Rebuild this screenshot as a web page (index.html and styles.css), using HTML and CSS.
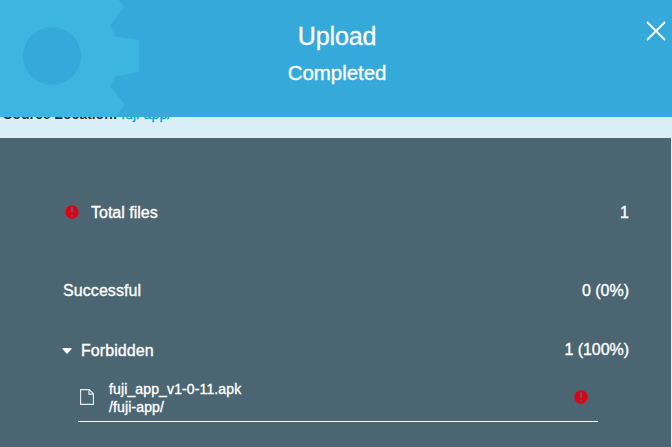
FILE: index.html
```
<!DOCTYPE html>
<html lang="en">
<head>
<meta charset="utf-8">
<title>Upload</title>
<link rel="stylesheet" href="styles.css">
</head>
<body>
<div class="dialog">
  <header class="header">
    <svg class="gear" viewBox="0 0 140 117" aria-hidden="true">
      <path fill="#3cb6e0" d="M0 0H118.500L123.300 5.500Q124 7 123 8.500L110.500 25L115 36.500L137 39.500Q139 40 139 42V70Q139 72 137 72.500L115 76.300L110.500 87L123.500 103Q124.500 105 123.500 106L116 117H0Z"/>
      <circle cx="52" cy="56" r="29" fill="#35aada"/>
    </svg>
    <h1 class="title">Upload</h1>
    <p class="status">Completed</p>
    <button class="close" aria-label="Close">
      <svg width="20" height="20" viewBox="0 0 20 20"><path d="M1 1L19 19M19 1L1 19" stroke="#fff" stroke-width="1.900"/></svg>
    </button>
  </header>
  <div class="location"><div class="location-text"><b>Source Location:</b> <a>fuji-app/</a></div></div>
  <main class="panel">
    <div class="row total">
      <svg class="alert" width="14" height="14" viewBox="0 0 14 14"><circle cx="7" cy="7" r="6.700" fill="#df0015"/><path d="M6 2.500H8L7.700 8.300H6.300ZM6.100 9.500H7.900V11.300H6.100Z" fill="#4b6672"/></svg>
      <span class="label">Total files</span>
      <span class="value">1</span>
    </div>
    <div class="row successful">
      <span class="label">Successful</span>
      <span class="value">0 (0%)</span>
    </div>
    <div class="row forbidden">
      <svg class="caret" width="10" height="6" viewBox="0 0 10 6"><path d="M0.500 0H9.500Q10 .5 9.500 1L5.500 5.500Q5 6 4.500 5.500L.5 1Q0 .5 .5 0Z" fill="#fff"/></svg>
      <span class="label">Forbidden</span>
      <span class="value">1 (100%)</span>
    </div>
    <div class="file">
      <svg class="doc" width="14" height="16" viewBox="0 0 14 16"><path d="M.6.600H9.200L13.400 4.800V15.400H.6ZM8.900.800V5.100H13.200" fill="none" stroke="#e8edef" stroke-width="1.100"/></svg>
      <div class="path"><div class="name">fuji_app_v1-0-11.apk</div><div>/fuji-app/</div></div>
      <svg class="alert" width="14" height="14" viewBox="0 0 14 14"><circle cx="7" cy="7" r="6.700" fill="#df0015"/><path d="M6 2.500H8L7.700 8.300H6.300ZM6.100 9.500H7.900V11.300H6.100Z" fill="#4b6672"/></svg>
    </div>
  </main>
</div>
</body>
</html>
```
FILE: styles.css
```
* { box-sizing: border-box; }
body {
  margin: 0;
  overflow: hidden;
  background: #e6edf0;
  color: #fff;
  font-family: "Liberation Sans", Arial, sans-serif;
}
.dialog { height: 447px; display: flex; flex-direction: column; }
.header {
  position: relative;
  height: 117px;
  flex: none;
  padding: 20px 0 0 2px;
  text-align: center;
  background: #35aada;
}
.gear { position: absolute; left: 0; top: 0; width: 140px; height: 117px; }
.title, .status { position: relative; margin: 0; font-weight: 400; }
.title { font-size: 25px; line-height: 32px; letter-spacing: -.1px; -webkit-text-stroke: .35px #fff; }
.status { margin-top: 9px; font-size: 20.5px; line-height: 24px; letter-spacing: -.05px; -webkit-text-stroke: .35px #fff; }
.close {
  position: absolute;
  right: 6px;
  top: 21px;
  width: 20px;
  height: 20px;
  padding: 0;
  border: 0;
  background: none;
}
.close svg { display: block; }
.location {
  height: 21px;
  flex: none;
  overflow: hidden;
  padding-left: 3px;
  background: #daeef7;
  color: #272d30;
  font-size: 14px;
  line-height: 16px;
}
.location-text { margin-top: -11px; white-space: nowrap; }
.location a { color: #109fd5; -webkit-text-stroke: .35px #109fd5; }
.panel {
  flex: 1;
  margin-right: 1px;
  padding: 65px 42px 0 63px;
  background: #4b6672;
}
.row {
  display: flex;
  align-items: center;
  height: 20px;
  font-size: 16px;
  line-height: 20px;
  -webkit-text-stroke: .35px #fff;
}
.alert, .caret, .doc { flex: none; -webkit-text-stroke: 0; }
.value { margin-left: auto; }
.total .alert { margin: -2px 12px 0 2px; }
.successful { margin-top: 58px; }
.successful .label, .forbidden .label { letter-spacing: .08px; }
.forbidden { margin-top: 40px; }
.forbidden .value { margin-top: -2px; letter-spacing: -.05px; }
.caret { margin: 0 9px 0 -1px; }
.file {
  display: flex;
  align-items: center;
  width: 520px;
  height: 51px;
  margin: 10px 0 0 15px;
  padding: 2px 10px 0 2px;
  border-bottom: 1px solid #fff;
}
.path {
  margin: 1px 0 0 15px;
  font-size: 14px;
  line-height: 18px;
  -webkit-text-stroke: .35px #fff;
}
.name, .path div { letter-spacing: .13px; }
.file .alert { margin-left: auto; }
```
